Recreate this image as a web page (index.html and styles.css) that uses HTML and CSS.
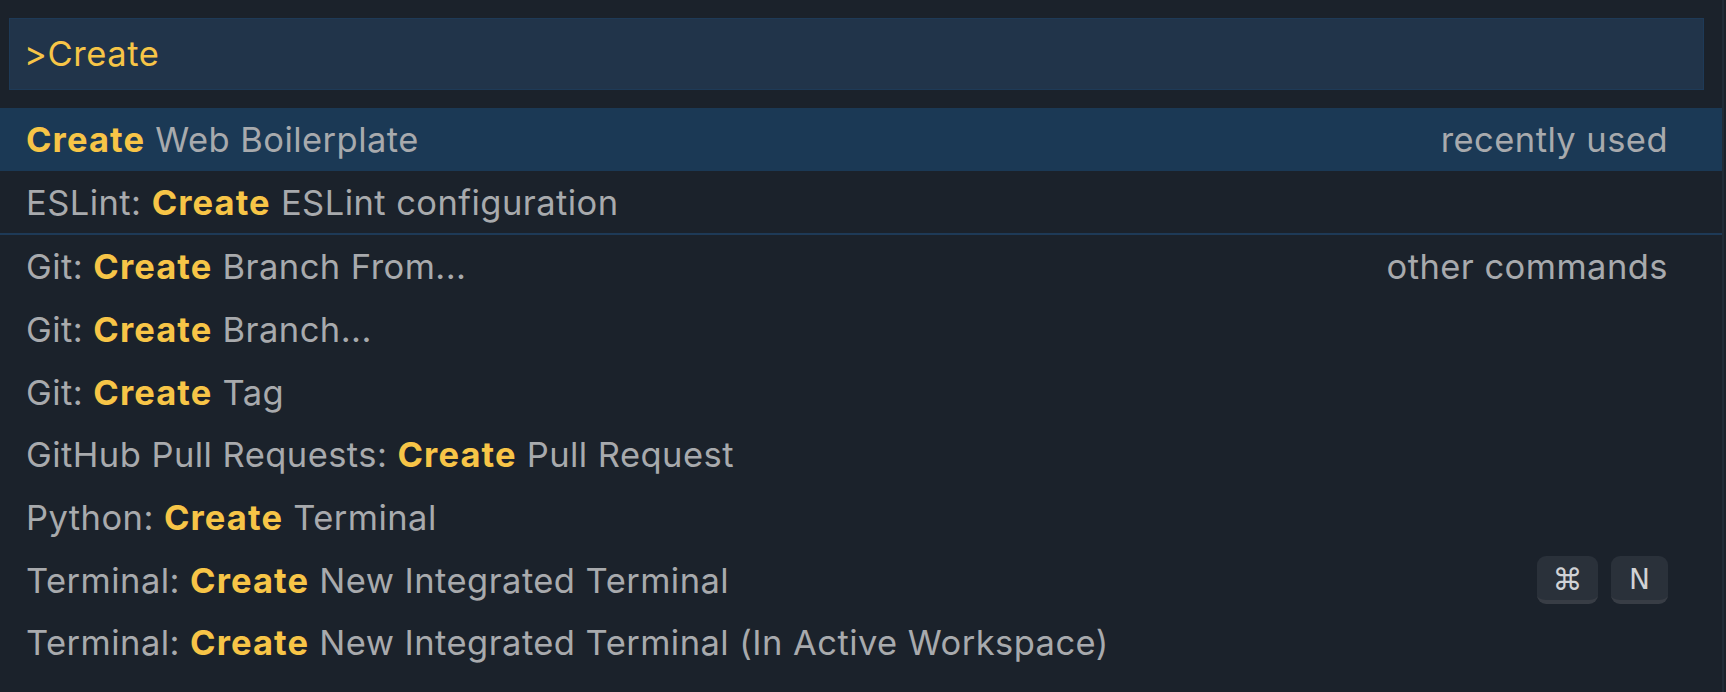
FILE: index.html
```html
<!DOCTYPE html>
<html>
<head>
<meta charset="utf-8">
<link rel="stylesheet" href="styles.css">
</head>
<body>
<div class="palette">
  <div class="input-wrap">
    <div class="input">&gt;Create</div>
  </div>
  <div class="list">
    <div class="row selected">
      <span class="label"><b>Create</b> Web Boilerplate</span>
      <span class="desc">recently used</span>
    </div>
    <div class="row">
      <span class="label">ESLint: <b>Create</b> ESLint configuration</span>
    </div>
    <div class="row sep">
      <span class="label">Git: <b>Create</b> Branch From...</span>
      <span class="desc">other commands</span>
    </div>
    <div class="row">
      <span class="label">Git: <b>Create</b> Branch...</span>
    </div>
    <div class="row">
      <span class="label">Git: <b>Create</b> Tag</span>
    </div>
    <div class="row">
      <span class="label">GitHub Pull Requests: <b>Create</b> Pull Request</span>
    </div>
    <div class="row">
      <span class="label">Python: <b>Create</b> Terminal</span>
    </div>
    <div class="row">
      <span class="label">Terminal: <b>Create</b> New Integrated Terminal</span>
      <span class="keys"><kbd class="key cmd">⌘</kbd><kbd class="key">N</kbd></span>
    </div>
    <div class="row">
      <span class="label">Terminal: <b>Create</b> New Integrated Terminal (In Active Workspace)</span>
    </div>
  </div>
</div>
</body>
</html>
```
FILE: styles.css
```css
html, body {
  margin: 0;
  padding: 0;
  background: #1b222b;
  height: 100%;
  overflow: hidden;
}
.palette {
  font-family: Inter, "Noto Sans", sans-serif;
  color: #a8aaad;
  width: 1722px;
  height: 692px;
  border-right: 2px solid #222c37;
}
.input-wrap {
  padding: 18px 18px 18px 9px;
}
.input {
  height: 70px;
  background: #21344a;
  border: 1px solid #1e3a57;
  color: #f7c547;
  font-size: 34.5px;
  letter-spacing: 0.6px;
  line-height: 70px;
  padding-left: 14px;
}
.list {
  display: flex;
  flex-direction: column;
}
.row {
  height: 62.7px;
  display: flex;
  align-items: center;
  justify-content: space-between;
  padding: 0 54px 0 26px;
  font-size: 34.5px;
  letter-spacing: 0.45px;
  white-space: nowrap;
}
.row.selected {
  background: #1b3955;
}
.row.sep {
  border-top: 2px solid #1e3a57;
}
.row b {
  color: #f7c547;
  font-weight: 700;
  letter-spacing: 1.1px;
}
.desc {
  color: #a8aaad;
}
.keys {
  display: flex;
  gap: 13px;
}
.key {
  font-family: "DejaVu Sans", Inter, sans-serif;
  height: 48px;
  min-width: 57px;
  box-sizing: border-box;
  display: flex;
  align-items: center;
  justify-content: center;
  background: #2a313a;
  border-radius: 9px;
  border-bottom: 4px solid #383d45;
  color: #d0d2d5;
  font-size: 28px;
  letter-spacing: 0;
  padding-top: 2px;
}
.key.cmd {
  min-width: 61px;
  font-size: 30px;
}
```
